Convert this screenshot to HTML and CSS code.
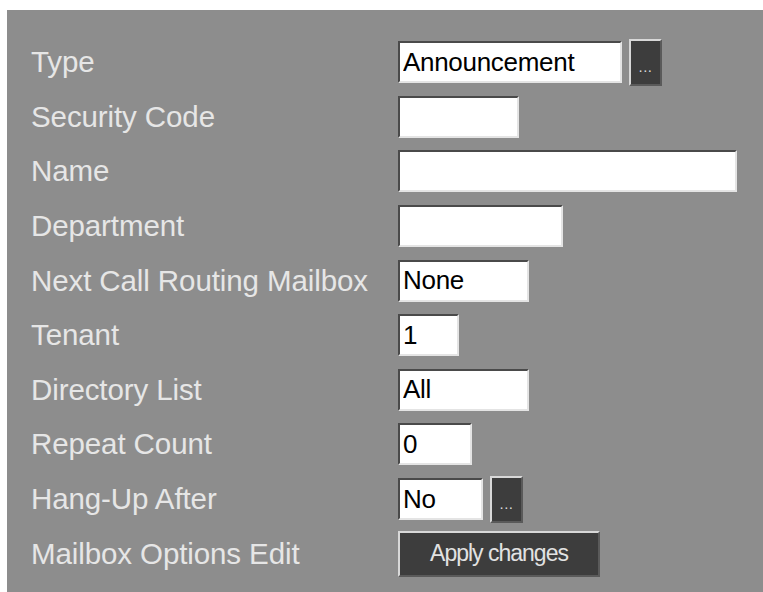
FILE: index.html
```html
<!DOCTYPE html>
<html lang="en">
<head>
<meta charset="utf-8">
<title>Mailbox Settings</title>
<link rel="stylesheet" href="styles.css">
</head>
<body>
<form class="panel">
  <div class="row">
    <label class="label">Type</label>
    <div class="field">
      <input class="box w-type" type="text" value="Announcement" readonly>
      <button class="pick" type="button">...</button>
    </div>
  </div>
  <div class="row">
    <label class="label">Security Code</label>
    <div class="field"><input class="box w-code" type="text" value=""></div>
  </div>
  <div class="row">
    <label class="label">Name</label>
    <div class="field"><input class="box w-name" type="text" value=""></div>
  </div>
  <div class="row">
    <label class="label">Department</label>
    <div class="field"><input class="box w-dept" type="text" value=""></div>
  </div>
  <div class="row">
    <label class="label">Next Call Routing Mailbox</label>
    <div class="field"><input class="box w-next" type="text" value="None"></div>
  </div>
  <div class="row">
    <label class="label">Tenant</label>
    <div class="field"><input class="box w-tenant" type="text" value="1"></div>
  </div>
  <div class="row">
    <label class="label">Directory List</label>
    <div class="field"><input class="box w-dir" type="text" value="All"></div>
  </div>
  <div class="row">
    <label class="label">Repeat Count</label>
    <div class="field"><input class="box w-repeat" type="text" value="0"></div>
  </div>
  <div class="row">
    <label class="label">Hang-Up After</label>
    <div class="field">
      <input class="box w-hang" type="text" value="No" readonly>
      <button class="pick" type="button">...</button>
    </div>
  </div>
  <div class="row">
    <label class="label">Mailbox Options Edit</label>
    <div class="field"><button class="apply" type="button">Apply changes</button></div>
  </div>
</form>
</body>
</html>
```
FILE: styles.css
```css
html, body {
  margin: 0;
  padding: 0;
  background: #ffffff;
  overflow: hidden;
}

/* grey settings panel */
.panel {
  margin: 10px 0 0 7px;
  height: 582px;
  box-sizing: border-box;
  padding: 25px 0 0 24px;
  background: #8d8d8d;
  display: grid;
  grid-template-columns: 367px 1fr;
  grid-auto-rows: 54.6px;
  align-content: start;
  font-family: "Liberation Sans", Arial, sans-serif;
}

.row {
  display: contents;
}

.label {
  align-self: center;
  color: #e6e6e6;
  font-size: 29.5px;
  line-height: 34px;
  letter-spacing: -0.1px;
  white-space: nowrap;
}

.field {
  align-self: center;
  display: flex;
  align-items: center;
  gap: 7px;
}

/* sunken text boxes */
.box {
  box-sizing: border-box;
  height: 42px;
  margin: 0;
  padding: 0 3px;
  border-style: solid;
  border-width: 2px;
  border-color: #4a4a4a #e4e4e4 #e4e4e4 #4a4a4a;
  background: #ffffff;
  color: #000000;
  font-family: "Liberation Sans", Arial, sans-serif;
  font-size: 26px;
  letter-spacing: -0.3px;
  outline: none;
}

.w-type { width: 224px; }
.w-code { width: 121px; }
.w-name { width: 339px; }
.w-dept { width: 165px; }
.w-next { width: 131px; }
.w-tenant { width: 61px; }
.w-dir { width: 131px; }
.w-repeat { width: 74px; }
.w-hang { width: 85px; }

/* raised dark buttons */
.pick,
.apply {
  box-sizing: border-box;
  margin: 0;
  border-style: solid;
  border-width: 2px;
  border-color: #d8d8d8 #5a5a5a #5a5a5a #d8d8d8;
  background: #3d3d3d;
  color: #dcdcdc;
  font-family: "Liberation Sans", Arial, sans-serif;
  cursor: pointer;
}

.pick {
  width: 33px;
  height: 47px;
  padding: 8px 0 0;
  font-size: 15px;
  line-height: 1;
  letter-spacing: 0.5px;
}

.apply {
  width: 202px;
  height: 46px;
  padding: 0;
  font-size: 23px;
  letter-spacing: -1px;
  color: #e2e2e2;
}
```
